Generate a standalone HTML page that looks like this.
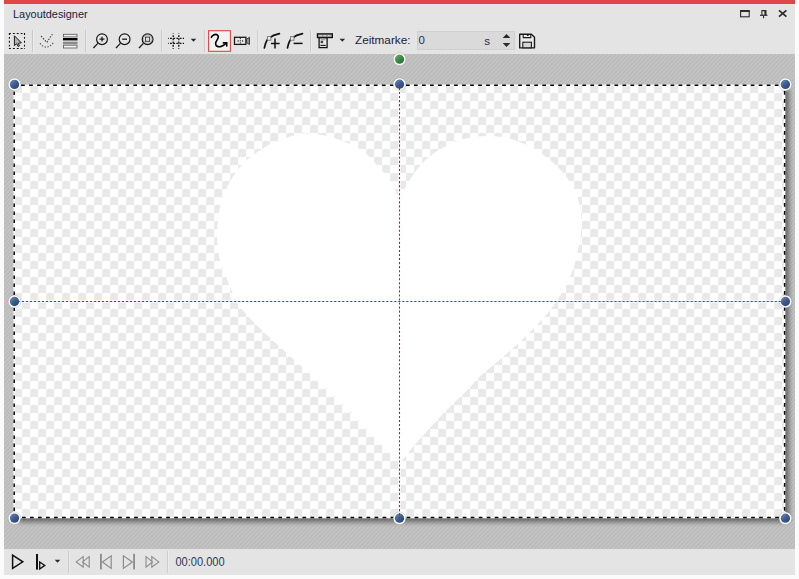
<!DOCTYPE html>
<html><head><meta charset="utf-8"><title>Layoutdesigner</title>
<style>
html,body{margin:0;padding:0;background:#fbfbfb;overflow:hidden}
svg{display:block}
text{font-family:"Liberation Sans",sans-serif}
</style></head><body>
<svg width="799" height="579" viewBox="0 0 799 579">
<defs>
<pattern id="hatch" patternUnits="userSpaceOnUse" width="4.2" height="4.4" x="0" y="0">
<rect width="4.2" height="4.4" fill="#c6c6c6"/>
<path d="M-2.1 6.6L6.3 -2.2M-6.3 6.6L2.1 -2.2M2.1 6.6L10.5 -2.2" stroke="#b9b9b9" stroke-width="1.5"/>
</pattern>
<pattern id="chk" patternUnits="userSpaceOnUse" width="16" height="16" x="14.1" y="85">
<rect width="16" height="16" fill="#fff"/>
<rect width="8" height="8" fill="#e9e9e9"/><rect x="8" y="8" width="8" height="8" fill="#e9e9e9"/>
</pattern>
<linearGradient id="hb" x1="0.15" y1="0.1" x2="0.85" y2="0.9"><stop offset="0" stop-color="#6482b2"/><stop offset="0.5" stop-color="#3d5c8f"/><stop offset="1" stop-color="#294676"/></linearGradient>
<linearGradient id="hg" x1="0.15" y1="0.1" x2="0.85" y2="0.9"><stop offset="0" stop-color="#6aa86a"/><stop offset="0.5" stop-color="#3f8a46"/><stop offset="1" stop-color="#2a6a33"/></linearGradient>
<filter id="sh" x="-5%" y="-5%" width="110%" height="110%"><feGaussianBlur stdDeviation="2.4"/></filter>
<clipPath id="area"><rect x="4" y="54" width="791" height="495"/></clipPath>
</defs>

<rect x="4" y="0" width="791" height="575" fill="#e4e4e4"/>
<rect x="4" y="0" width="791" height="4" fill="#dd4747"/>
<rect x="4" y="54" width="791" height="495" fill="url(#hatch)"/>
<g clip-path="url(#area)"><rect x="18.2" y="89.27" width="770.9" height="432.78" fill="#000" opacity="0.45" filter="url(#sh)"/></g>
<rect x="14.2" y="85.27" width="770.4" height="432.28" fill="url(#chk)"/>
<path d="M398.5 197.0C397.8 195.7 396.0 191.7 394.5 189.0C393.0 186.3 391.8 183.9 389.7 180.8C387.6 177.7 384.6 173.5 382.0 170.4C379.4 167.3 376.4 164.8 373.8 162.0C371.2 159.2 369.2 156.3 366.2 153.8C363.2 151.3 359.7 149.1 356.0 147.0C352.3 144.9 348.2 143.2 344.0 141.5C339.8 139.8 335.0 138.1 331.0 137.0C327.0 135.9 323.8 135.4 320.0 134.8C316.2 134.2 312.2 133.4 308.0 133.5C303.8 133.6 298.3 134.7 294.6 135.4C290.9 136.2 290.0 136.6 286.0 138.0C282.0 139.4 274.4 142.1 270.4 144.0C266.4 145.9 264.5 147.5 261.8 149.2C259.1 150.9 256.6 152.5 254.0 154.4C251.4 156.3 248.9 158.0 246.3 160.4C243.7 162.8 241.1 165.7 238.5 169.0C235.9 172.3 232.9 176.7 230.7 180.3C228.5 183.9 226.9 187.4 225.5 190.6C224.1 193.8 223.0 196.1 222.0 199.3C221.0 202.5 220.2 205.9 219.5 209.6C218.8 213.3 218.2 217.5 217.8 221.7C217.4 225.9 217.2 229.5 217.3 235.0C217.4 240.5 217.2 247.8 218.6 254.5C220.0 261.2 223.2 268.7 225.5 275.0C227.8 281.3 230.2 287.3 232.5 292.5C234.8 297.7 235.7 300.8 239.4 306.0C243.2 311.2 248.4 316.9 255.0 323.6C261.6 330.3 271.5 339.1 279.0 346.0C286.5 352.9 292.5 358.3 300.0 365.0C307.5 371.7 316.0 378.7 324.0 386.0C332.0 393.3 342.2 403.3 348.0 409.0C353.8 414.7 352.7 414.0 358.5 420.0C364.3 426.0 375.6 437.7 382.6 444.8C389.6 451.9 397.5 459.6 400.5 462.5C402.8 459.7 409.4 451.1 414.0 445.7C418.6 440.3 423.3 435.1 428.0 430.0C432.7 424.9 437.3 419.8 442.0 415.0C446.7 410.2 451.3 405.6 456.0 401.0C460.7 396.4 466.1 391.5 470.0 387.5C473.9 383.5 473.8 382.2 479.4 377.0C485.0 371.8 496.1 363.0 503.6 356.4C511.1 349.8 518.1 343.5 524.4 337.4C530.7 331.3 536.4 325.7 541.6 320.0C546.8 314.3 551.4 308.7 555.4 303.0C559.4 297.3 562.6 291.9 565.8 285.6C569.0 279.3 572.1 272.5 574.4 265.0C576.7 257.5 578.4 247.9 579.6 240.7C580.8 233.5 582.0 228.8 581.8 222.0C581.6 215.2 580.2 206.7 578.2 200.0C576.2 193.3 573.7 187.8 570.0 182.0C566.3 176.2 560.8 170.0 556.2 165.4C551.6 160.8 547.5 157.8 542.5 154.4C537.5 151.0 532.0 147.5 526.0 144.8C520.0 142.1 513.1 139.5 506.7 138.0C500.3 136.5 493.8 136.0 487.4 136.0C480.9 136.0 474.0 136.8 468.0 138.0C462.0 139.2 456.7 141.2 451.6 143.4C446.5 145.6 440.9 148.9 437.4 151.0C433.9 153.1 433.1 153.8 430.5 155.9C427.9 158.0 424.5 160.8 422.0 163.5C419.5 166.2 417.4 169.1 415.3 171.8C413.2 174.6 411.3 177.5 409.7 180.0C408.1 182.5 407.5 184.2 405.6 187.0C403.7 189.8 399.7 195.3 398.5 197.0Z" fill="#fff"/>
<rect x="14.2" y="85.27" width="770.4" height="432.28" fill="none" stroke="#fff" stroke-width="1.5"/>
<path d="M21.1 85.27H784.6" stroke="#000" stroke-width="1.45" stroke-dasharray="3.7 4.318"/>
<path d="M21.97 517.55H784.6" stroke="#000" stroke-width="1.45" stroke-dasharray="3.7 4.313"/>
<path d="M14.2 91.5V517.55M784.6 91.1V517.55" stroke="#000" stroke-width="1.45" stroke-dasharray="3.6 4.4"/>
<path d="M14.2 301.5H784.6M399.5 85.27V517.55" stroke="#fff" stroke-width="2.6" opacity="0.75"/>
<circle cx="14.5" cy="84.4" r="6.3" fill="#fff" stroke="#000" stroke-opacity="0.22" stroke-width="0.6"/><circle cx="14.5" cy="84.4" r="4.65" fill="url(#hb)"/>
<circle cx="399.5" cy="84.2" r="6.3" fill="#fff" stroke="#000" stroke-opacity="0.22" stroke-width="0.6"/><circle cx="399.5" cy="84.2" r="4.65" fill="url(#hb)"/>
<circle cx="785.4" cy="84.4" r="6.3" fill="#fff" stroke="#000" stroke-opacity="0.22" stroke-width="0.6"/><circle cx="785.4" cy="84.4" r="4.65" fill="url(#hb)"/>
<circle cx="14.5" cy="301.5" r="6.3" fill="#fff" stroke="#000" stroke-opacity="0.22" stroke-width="0.6"/><circle cx="14.5" cy="301.5" r="4.65" fill="url(#hb)"/>
<circle cx="785.4" cy="301.5" r="6.3" fill="#fff" stroke="#000" stroke-opacity="0.22" stroke-width="0.6"/><circle cx="785.4" cy="301.5" r="4.65" fill="url(#hb)"/>
<circle cx="14.5" cy="518.1" r="6.3" fill="#fff" stroke="#000" stroke-opacity="0.22" stroke-width="0.6"/><circle cx="14.5" cy="518.1" r="4.65" fill="url(#hb)"/>
<circle cx="399.5" cy="518.2" r="6.3" fill="#fff" stroke="#000" stroke-opacity="0.22" stroke-width="0.6"/><circle cx="399.5" cy="518.2" r="4.65" fill="url(#hb)"/>
<circle cx="785.4" cy="518.2" r="6.3" fill="#fff" stroke="#000" stroke-opacity="0.22" stroke-width="0.6"/><circle cx="785.4" cy="518.2" r="4.65" fill="url(#hb)"/>
<circle cx="399.5" cy="59.2" r="6.3" fill="#fff" stroke="#000" stroke-opacity="0.22" stroke-width="0.6"/><circle cx="399.5" cy="59.2" r="4.65" fill="url(#hg)"/>
<path d="M13.84 301.5H784.9" stroke="#f40808" stroke-width="1.08" stroke-dasharray="2.1 1.9046"/>
<path d="M399.5 84.9V518.15" stroke="#f40808" stroke-width="1.08" stroke-dasharray="2.1 1.9495" stroke-dashoffset="1.05"/>
<text x="13" y="18.2" font-size="11.6" fill="#1c1c3c" textLength="74.6" lengthAdjust="spacingAndGlyphs">Layoutdesigner</text>
<rect x="740.6" y="11.4" width="8.6" height="5.4" fill="none" stroke="#2b2b2b" stroke-width="1.1"/><rect x="740" y="10" width="9.8" height="2" fill="#2b2b2b"/>
<path d="M761.9 15V10.6h3.8V15" fill="none" stroke="#2b2b2b" stroke-width="1.1"/><rect x="764.4" y="10.1" width="1.9" height="5" fill="#2b2b2b"/><rect x="760" y="14.7" width="7.4" height="1.2" fill="#2b2b2b"/><rect x="763" y="15.5" width="1.1" height="2.8" fill="#2b2b2b"/>
<path d="M779 10.3l7.4 6.4M786.4 10.3l-7.4 6.4" stroke="#2b2b2b" stroke-width="1.7"/>
<path d="M9 33.4H25M9 48.5H25M9.4 33V49M24.5 33V49" fill="none" stroke="#111" stroke-width="1.05" stroke-dasharray="1.9 2"/>
<path d="M14.4 35.8V45.6L16.7 43.7L18 46.4L19.5 45.8L18.3 43.3L21.4 42.8Z" fill="#b4b4b4" stroke="#1a1a1a" stroke-width="1" stroke-linejoin="round"/>
<rect x="32.0" y="30" width="1" height="22" fill="#c9c9c9"/><rect x="33.0" y="30" width="1" height="22" fill="#ececec"/>
<path d="M41 36L46.8 42.4L52.4 34.2" fill="none" stroke="#3a3a3a" stroke-width="1.1" stroke-dasharray="1.5 1.4"/><path d="M40 43.2Q46.2 51.4 53.8 42.4" fill="none" stroke="#5a5a5a" stroke-width="1.1" stroke-dasharray="1.5 1.4"/>
<rect x="63.5" y="34.3" width="13.5" height="2.6" fill="#f4f4f4" stroke="#555" stroke-width="0.8"/><rect x="63" y="38" width="14.5" height="2.4" fill="#000"/><rect x="63" y="41.7" width="14.5" height="2.6" fill="#8a8a8a"/><rect x="63.5" y="45.2" width="13.5" height="2.8" fill="#f4f4f4" stroke="#555" stroke-width="0.8"/>
<rect x="85.0" y="30" width="1" height="22" fill="#c9c9c9"/><rect x="86.0" y="30" width="1" height="22" fill="#ececec"/>
<circle cx="102" cy="39.2" r="5.4" fill="none" stroke="#1a1a1a" stroke-width="1.2"/><path d="M97.8 43.400000000000006L93.4 48.0" stroke="#1a1a1a" stroke-width="1.3"/><path d="M99.6 39.2h4.8M102 36.8v4.8" stroke="#1a1a1a" stroke-width="1.3"/>
<circle cx="124.6" cy="39.2" r="5.4" fill="none" stroke="#1a1a1a" stroke-width="1.2"/><path d="M120.39999999999999 43.400000000000006L116.0 48.0" stroke="#1a1a1a" stroke-width="1.3"/><path d="M122.2 39.2h4.8" stroke="#1a1a1a" stroke-width="1.3"/>
<circle cx="147.6" cy="39.2" r="5.4" fill="none" stroke="#1a1a1a" stroke-width="1.2"/><path d="M143.4 43.400000000000006L139.0 48.0" stroke="#1a1a1a" stroke-width="1.3"/><circle cx="147.6" cy="39.2" r="4.3" fill="none" stroke="#777" stroke-width="0.5"/><rect x="145.5" y="37.1" width="4.2" height="4.2" fill="#dcdcdc" stroke="#222" stroke-width="0.8"/>
<rect x="161.1" y="30" width="1" height="22" fill="#c9c9c9"/><rect x="162.1" y="30" width="1" height="22" fill="#ececec"/>
<path d="M168 38.4H184M168 43.4H184" stroke="#111" stroke-width="1.3" stroke-dasharray="1.9 1.3" stroke-dashoffset="1.2"/><path d="M173.2 33.4V48.8M178.8 33.4V48.8" stroke="#111" stroke-width="1.3" stroke-dasharray="1.9 1.3" stroke-dashoffset="1.4"/>
<path d="M190.7 38.7h5.6l-2.8 3z" fill="#2a2a2a"/>
<rect x="203.9" y="30" width="1" height="22" fill="#c9c9c9"/><rect x="204.9" y="30" width="1" height="22" fill="#ececec"/>
<rect x="208.6" y="30.7" width="21.8" height="20.6" fill="#f2f2f2" stroke="#e04444" stroke-width="1.1"/>
<path d="M211.4 37.3C212.4 34.6 216.6 33.4 218 35.6C219.6 38.2 215.6 40.8 215.6 43.4C215.6 46 218 47.2 220.6 46.6C222.8 46.1 224.6 44.8 226 43.4" fill="none" stroke="#000" stroke-width="1.6" stroke-linecap="round"/><path d="M223.4 42.9H226.7V46" fill="none" stroke="#000" stroke-width="1.6" stroke-linecap="round" stroke-linejoin="miter"/>
<rect x="234.5" y="37.3" width="11.4" height="7.1" fill="#e9e9e9" stroke="#1a1a1a" stroke-width="1.3"/><path d="M246.4 39.4L249.4 37.3V44.5L246.4 42.4Z" fill="#9a9a9a" stroke="#222" stroke-width="0.9"/><path d="M240.3 38V44" stroke="#222" stroke-width="1" stroke-dasharray="1.2 1"/><rect x="237.5" y="40.4" width="1.3" height="1.2" fill="#222"/><rect x="241.9" y="40.4" width="1.3" height="1.2" fill="#222"/>
<rect x="257.3" y="30" width="1" height="22" fill="#c9c9c9"/><rect x="258.3" y="30" width="1" height="22" fill="#ececec"/>
<path d="M264.4 47.8C265.4 43 266.4 40 268.79999999999995 38.2C272.4 35.4 275.4 34.4 279.4 33.6" fill="none" stroke="#111" stroke-width="1.7" stroke-linecap="round"/><rect x="267.29999999999995" y="36.7" width="3.6" height="3.5" fill="#ececec" stroke="#666" stroke-width="0.8"/><path d="M271 43.4h8.6M275 38.6v9.8" stroke="#111" stroke-width="1.5"/>
<path d="M287.5 47.8C288.5 43 289.5 40 291.9 38.2C295.5 35.4 298.5 34.4 302.5 33.6" fill="none" stroke="#111" stroke-width="1.7" stroke-linecap="round"/><rect x="290.4" y="36.7" width="3.6" height="3.5" fill="#ececec" stroke="#666" stroke-width="0.8"/><path d="M293.6 43.4h9" stroke="#111" stroke-width="1.5"/>
<rect x="310.1" y="30" width="1" height="22" fill="#c9c9c9"/><rect x="311.1" y="30" width="1" height="22" fill="#ececec"/>
<rect x="317.4" y="33.8" width="15" height="3.8" fill="#8a8a8a" stroke="#111" stroke-width="1.2"/><path d="M319 35.7h12" stroke="#e6e6e6" stroke-width="0.9" stroke-dasharray="3 1.3"/><rect x="319.1" y="37.8" width="8" height="9.8" fill="#ededed" stroke="#111" stroke-width="1.3"/><path d="M320.6 39.8h5" stroke="#777" stroke-width="0.8"/><rect x="320.6" y="40.8" width="2.6" height="2.4" fill="#444"/><path d="M320.4 45.4h5.4" stroke="#222" stroke-width="1.2"/>
<path d="M339.5 38.8h5.6l-2.8 3z" fill="#2a2a2a"/>
<text x="355" y="44.3" font-size="11.6" fill="#1c1c3c" textLength="55.5" lengthAdjust="spacingAndGlyphs">Zeitmarke:</text>
<rect x="417.5" y="31.5" width="97" height="18" fill="#dadada" stroke="#d0d0d0" stroke-width="1"/>
<text x="418.6" y="44.3" font-size="11.4" fill="#2a2a55">0</text>
<text x="484.3" y="44.9" font-size="11.6" fill="#2a2a55">s</text>
<path d="M506.5 33.9L510.3 37.9H502.7Z M506.5 47.1L510.3 42.9H502.7Z" fill="#2a2a2a"/>
<path d="M519.7 34.2H531.4L534.5 37.2V47.9H519.7Z" fill="#ececec" stroke="#1a1a1a" stroke-width="1.4" stroke-linejoin="round"/><path d="M523.2 34.4V37.6H530.8V34.4" fill="none" stroke="#1a1a1a" stroke-width="1.1"/><rect x="527" y="34.4" width="1.6" height="1.6" fill="#1a1a1a"/><rect x="522.8" y="42.2" width="8.6" height="5.6" fill="#d6d6d6" stroke="#1a1a1a" stroke-width="1.1"/>
<path d="M12.6 555.2V568.4L22.8 561.8Z" fill="none" stroke="#111" stroke-width="1.5" stroke-linejoin="miter"/>
<rect x="36" y="554" width="2" height="15.6" fill="#111"/><path d="M39.7 562V569L44.8 565.4Z" fill="none" stroke="#111" stroke-width="1.3"/>
<path d="M54.7 559.7h5.6l-2.8 3z" fill="#2a2a2a"/>
<rect x="68.1" y="551" width="1" height="22" fill="#c9c9c9"/><rect x="69.1" y="551" width="1" height="22" fill="#ececec"/>
<path d="M83.2 556.6V567.2L76.2 561.9ZM89.2 556.6V567.2L82.6 561.9Z" fill="none" stroke="#8c8c8c" stroke-width="1.1"/>
<rect x="100" y="553.8" width="1.8" height="15.6" fill="#8c8c8c"/><path d="M111.2 555.8V568.4L102.4 562Z" fill="none" stroke="#8c8c8c" stroke-width="1.2"/>
<rect x="133.2" y="553.8" width="1.8" height="15.6" fill="#8c8c8c"/><path d="M123.4 555.8V568.4L132.4 562Z" fill="none" stroke="#8c8c8c" stroke-width="1.2"/>
<path d="M146 556.6V567.2L152.6 561.9ZM151.8 556.6V567.2L158.8 561.9Z" fill="none" stroke="#8c8c8c" stroke-width="1.1"/>
<rect x="166.9" y="551" width="1" height="22" fill="#c9c9c9"/><rect x="167.9" y="551" width="1" height="22" fill="#ececec"/>
<text x="175.4" y="566" font-size="12.6" fill="#2a3a5a" textLength="49.2" lengthAdjust="spacingAndGlyphs">00:00.000</text>
</svg></body></html>
